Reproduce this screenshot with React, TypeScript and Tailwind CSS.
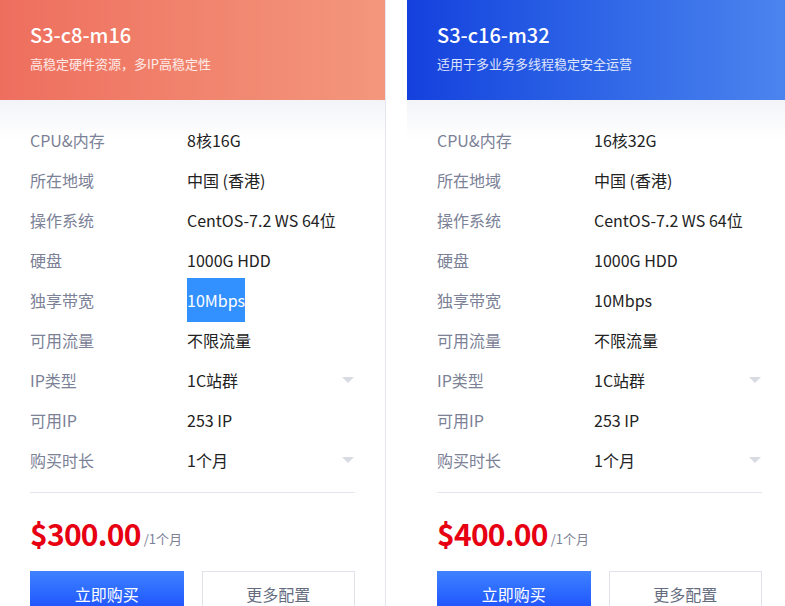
import React from "react";

const rows1 = [
  ["CPU&内存", "8核16G"],
  ["所在地域", "中国 (香港)"],
  ["操作系统", "CentOS-7.2 WS 64位"],
  ["硬盘", "1000G HDD"],
  ["独享带宽", "10Mbps"],
  ["可用流量", "不限流量"],
  ["IP类型", "1C站群"],
  ["可用IP", "253 IP"],
  ["购买时长", "1个月"],
];

function Card({ title, sub, grad, cpu, price, highlight }: { title: string; sub: string; grad: string; cpu: string; price: string; highlight?: boolean }) {
  const rows = rows1.map((r, i) => (i === 0 ? [r[0], cpu] : r));
  return (
    <div className="w-[386px] shrink-0 h-[640px] border-r border-[#e4e6ef] bg-white">
      <div className={`h-[100px] pl-[30px] pt-[22px] text-white ${grad}`}>
        <div className="text-[20px] leading-[26px] font-medium">{title}</div>
        <div className="text-[13px] leading-[18px] mt-[7px] text-white/85">{sub}</div>
      </div>
      <div className="px-[30px] pt-[20px] bg-gradient-to-b from-[#f3f4f8] to-white to-[40px]">
        {rows.map(([k, v], i) => (
          <div key={k} className="h-[40px] flex items-center text-[16px]">
            <div className="w-[157px] text-[#7b8196]">{k}</div>
            <div className="flex-1 text-[#222]">
              {highlight && i === 4 ? <span className="bg-[#3390ff] text-white py-[10px]">{v}</span> : v}
            </div>
            {(i === 6 || i === 8) && (
              <div className="w-0 h-0 border-l-[6px] border-r-[6px] border-t-[6px] border-l-transparent border-r-transparent border-t-[#d9dbe3] mr-[1px]" />
            )}
          </div>
        ))}
        <div className="border-t border-[#e4e6ef] mt-[12px]" />
        <div className="flex items-end mt-[22px] h-[36px]">
          <span className="text-[30px] leading-[36px] font-bold text-[#e60012] tracking-tight">{price}</span>
          <span className="text-[13px] text-[#7b8196] ml-[3px] mb-[3px]">/1个月</span>
        </div>
        <div className="flex gap-[18px] mt-[20px]">
          <div className="w-[154px] h-[46px] flex items-center justify-center text-white text-[16px] bg-gradient-to-b from-[#3f82ff] to-[#1f45ff]">立即购买</div>
          <div className="w-[154px] h-[46px] flex items-center justify-center text-[#666c80] text-[16px] border border-[#e1e3ea]">更多配置</div>
        </div>
      </div>
    </div>
  );
}

export default function App() {
  return (
    <div className="w-[785px] h-[606px] overflow-hidden bg-white flex gap-[21px]" style={{ fontFamily: '"Noto Sans CJK SC", "Noto Sans", sans-serif' }}>
      <Card title="S3-c8-m16" sub="高稳定硬件资源，多IP高稳定性" grad="bg-gradient-to-r from-[#ee6e5e] to-[#f3977c]" cpu="8核16G" price="$300.00" highlight />
      <Card title="S3-c16-m32" sub="适用于多业务多线程稳定安全运营" grad="bg-gradient-to-r from-[#1540dd] to-[#4d85ef]" cpu="16核32G" price="$400.00" />
    </div>
  );
}
